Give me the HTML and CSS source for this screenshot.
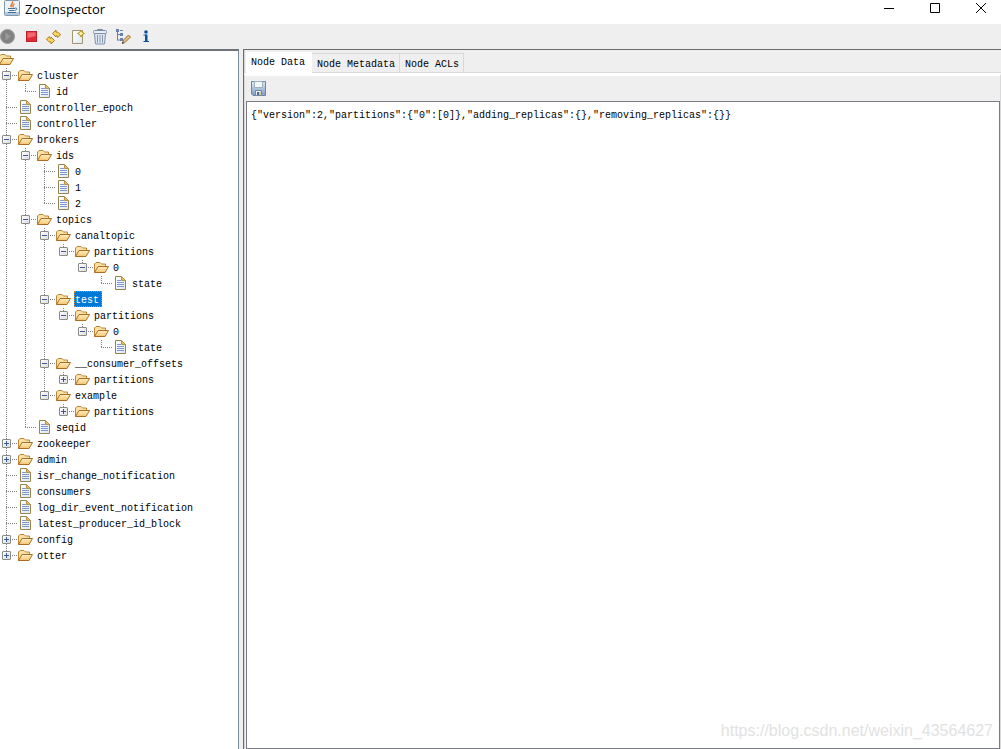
FILE: index.html
```html
<!DOCTYPE html>
<html lang="en">
<head>
<meta charset="utf-8">
<title>ZooInspector</title>
<link rel="stylesheet" href="styles.css">
</head>
<body>
<svg class="sprite" aria-hidden="true">
  <defs>
    <linearGradient id="gold" x1="0" y1="0" x2="0" y2="1"><stop offset="0" stop-color="#fff0c4"/><stop offset="1" stop-color="#f5c46c"/></linearGradient>
    <linearGradient id="paper" x1="0" y1="0" x2="1" y2="1"><stop offset="0" stop-color="#ffffff"/><stop offset="1" stop-color="#dde8f8"/></linearGradient>
    <linearGradient id="steel" x1="0" y1="0" x2="0" y2="1"><stop offset="0" stop-color="#dfe9f5"/><stop offset="1" stop-color="#7f9cc4"/></linearGradient>
  </defs>
  <symbol id="folder" viewBox="0 0 16 16">
    <path d="M.5 12.500V4L2 2.500h4L7.500 4h4V6.500" fill="#fbe2a4" stroke="#b98637"/>
    <path d="M.5 12.500 4 6.500h10.500L11 12.500z" fill="url(#gold)" stroke="#a96d24" stroke-linejoin="round"/>
  </symbol>
  <symbol id="file" viewBox="0 0 16 16">
    <path d="M2.500.5h6L12.500 4.500v9h-10z" fill="url(#paper)" stroke="#94854f"/>
    <path d="M8.500.5v4h4z" fill="#e8bd62" stroke="#b9924a"/>
    <path d="M4 4.500h4M4 6.500h7M4 8.500h7M4 10.500h7" stroke="#8098cb"/>
  </symbol>
</svg>

<header class="titlebar">
  <svg class="app-icon" viewBox="0 0 16 16" aria-hidden="true">
    <rect x=".5" y=".5" width="15" height="15" rx="1" fill="#e9f0f6" stroke="#8098ad"/>
    <path d="M1 12h14v3H1z" fill="#b4c8d9"/>
    <path d="M8.500 1.500c1 2-3 3-1 5.500M10.500 4c-2 1-2 2-1 3.500" fill="none" stroke="#e66a18" stroke-width="1.300"/>
    <path d="M4 8.500h7M11 8c3 0 2 2-.5 2.500M5 10.500h5M4 12.500h8" fill="none" stroke="#44719a"/>
  </svg>
  <h1 class="title">ZooInspector</h1>
  <div class="window-buttons">
    <button class="window-button" aria-label="Minimize"><svg viewBox="0 0 12 12"><path d="M1 6.500h10"/></svg></button>
    <button class="window-button" aria-label="Maximize"><svg viewBox="0 0 12 12"><path d="M1.500 1.500h9v9h-9z"/></svg></button>
    <button class="window-button" aria-label="Close"><svg viewBox="0 0 12 12"><path d="M1 1l10 10M11 1 1 11"/></svg></button>
  </div>
</header>

<div class="toolbar" role="toolbar" aria-label="Main">
  <button class="tool" aria-label="Connect"><svg viewBox="0 0 16 16"><circle cx="7.500" cy="7.500" r="7" fill="#828282" stroke="#999"/><path d="M5.500 3.500v8l5-4z" fill="#9b9b9b"/></svg></button>
  <button class="tool" aria-label="Disconnect"><svg viewBox="0 0 16 16"><rect x="3.500" y="2.500" width="10" height="10" fill="#e22b38" stroke="#c51c29"/><path d="M4.500 3.500h8V7l-8 2z" fill="#f06a70"/></svg></button>
  <button class="tool" aria-label="Refresh"><svg viewBox="0 0 16 16"><path d="M6.500 4.500 10 1v2c2 0 3.500 1 4.500 3l-3 2.500c0-1.500-.5-2-1.500-2V8z" fill="#f8d663" stroke="#b27b18" stroke-linejoin="round"/><path d="M8.500 11.500 5 15v-2c-2 0-3.500-1-4.500-3l3-2.500c0 1.500.5 2 1.500 2V8z" fill="#f8d663" stroke="#b27b18" stroke-linejoin="round"/></svg></button>
  <button class="tool" aria-label="Add node"><svg viewBox="0 0 16 16"><path d="M3.500 1.500h10v13h-10z" fill="url(#paper)" stroke="#a3956b"/><path d="m12 1 1.200 2.300L15.500 4.500 13.200 5.700 12 8l-1.200-2.300L8.500 4.500l2.300-1.200z" fill="#fff3a0" stroke="#b58e1c"/></svg></button>
  <button class="tool" aria-label="Delete node"><svg viewBox="0 0 16 16"><path d="M5.500 2.500v-2h5v2" fill="none" stroke="#7c8ca5"/><path d="M2.500 4.500h11l-1 10.500h-9z" fill="#dce4ef" stroke="#8191ab"/><rect x="1.500" y="1.500" width="13" height="3" rx="1" fill="#e9eff6" stroke="#7c8ca5"/><path d="M5.500 6v7.500M8 6v7.500M10.500 6v7.500" stroke="#8a9ab3"/></svg></button>
  <button class="tool" aria-label="Node viewers"><svg viewBox="0 0 16 16"><path d="M2.500 2v9.500M2.500 5.500h3M2.500 11h3" fill="none" stroke="#6880a9"/><path d="M1 0h3v3H1zM5 1h3v1H5zM5 4h3v3H5zM5 9h3v3H5z" fill="#6880b0"/><path d="M7.500 14 8.500 11 13.500 6l2 2-5 5z" fill="#e6bd7a" stroke="#997043"/><path d="m7 15 .5-2 1.500 1.500z" fill="#333"/></svg></button>
  <button class="tool" aria-label="About"><svg viewBox="0 0 16 16"><circle cx="8" cy="3" r="1.800" fill="#07539b"/><path d="M5.500 5.500H9.500v6.500H11v1H5.500v-1H7V6.500H5.500z" fill="#07539b"/></svg></button>
</div>

<main class="split">
  <nav class="tree-pane" aria-label="Nodes">
    <ul class="tree root">
      <li><div class="row"><svg class="icon"><use href="#folder"/></svg></div>
      <ul class="tree">
        <li><div class="row"><button class="toggle" aria-label="Collapse cluster"></button><svg class="icon"><use href="#folder"/></svg><span class="label">cluster</span></div>
          <ul class="tree">
            <li><div class="row"><svg class="icon"><use href="#file"/></svg><span class="label">id</span></div></li>
          </ul></li>
        <li><div class="row"><svg class="icon"><use href="#file"/></svg><span class="label">controller_epoch</span></div></li>
        <li><div class="row"><svg class="icon"><use href="#file"/></svg><span class="label">controller</span></div></li>
        <li><div class="row"><button class="toggle" aria-label="Collapse brokers"></button><svg class="icon"><use href="#folder"/></svg><span class="label">brokers</span></div>
          <ul class="tree">
            <li><div class="row"><button class="toggle" aria-label="Collapse ids"></button><svg class="icon"><use href="#folder"/></svg><span class="label">ids</span></div>
              <ul class="tree">
                <li><div class="row"><svg class="icon"><use href="#file"/></svg><span class="label">0</span></div></li>
                <li><div class="row"><svg class="icon"><use href="#file"/></svg><span class="label">1</span></div></li>
                <li><div class="row"><svg class="icon"><use href="#file"/></svg><span class="label">2</span></div></li>
              </ul></li>
            <li><div class="row"><button class="toggle" aria-label="Collapse topics"></button><svg class="icon"><use href="#folder"/></svg><span class="label">topics</span></div>
              <ul class="tree">
                <li><div class="row"><button class="toggle" aria-label="Collapse canaltopic"></button><svg class="icon"><use href="#folder"/></svg><span class="label">canaltopic</span></div>
                  <ul class="tree">
                    <li><div class="row"><button class="toggle" aria-label="Collapse partitions"></button><svg class="icon"><use href="#folder"/></svg><span class="label">partitions</span></div>
                      <ul class="tree">
                        <li><div class="row"><button class="toggle" aria-label="Collapse 0"></button><svg class="icon"><use href="#folder"/></svg><span class="label">0</span></div>
                          <ul class="tree">
                            <li><div class="row"><svg class="icon"><use href="#file"/></svg><span class="label">state</span></div></li>
                          </ul></li>
                      </ul></li>
                  </ul></li>
                <li><div class="row"><button class="toggle" aria-label="Collapse test"></button><svg class="icon"><use href="#folder"/></svg><span class="label selected">test</span></div>
                  <ul class="tree">
                    <li><div class="row"><button class="toggle" aria-label="Collapse partitions"></button><svg class="icon"><use href="#folder"/></svg><span class="label">partitions</span></div>
                      <ul class="tree">
                        <li><div class="row"><button class="toggle" aria-label="Collapse 0"></button><svg class="icon"><use href="#folder"/></svg><span class="label">0</span></div>
                          <ul class="tree">
                            <li><div class="row"><svg class="icon"><use href="#file"/></svg><span class="label">state</span></div></li>
                          </ul></li>
                      </ul></li>
                  </ul></li>
                <li><div class="row"><button class="toggle" aria-label="Collapse __consumer_offsets"></button><svg class="icon"><use href="#folder"/></svg><span class="label">__consumer_offsets</span></div>
                  <ul class="tree">
                    <li><div class="row"><button class="toggle closed" aria-label="Expand partitions"></button><svg class="icon"><use href="#folder"/></svg><span class="label">partitions</span></div></li>
                  </ul></li>
                <li><div class="row"><button class="toggle" aria-label="Collapse example"></button><svg class="icon"><use href="#folder"/></svg><span class="label">example</span></div>
                  <ul class="tree">
                    <li><div class="row"><button class="toggle closed" aria-label="Expand partitions"></button><svg class="icon"><use href="#folder"/></svg><span class="label">partitions</span></div></li>
                  </ul></li>
              </ul></li>
            <li><div class="row"><svg class="icon"><use href="#file"/></svg><span class="label">seqid</span></div></li>
          </ul></li>
        <li><div class="row"><button class="toggle closed" aria-label="Expand zookeeper"></button><svg class="icon"><use href="#folder"/></svg><span class="label">zookeeper</span></div></li>
        <li><div class="row"><button class="toggle closed" aria-label="Expand admin"></button><svg class="icon"><use href="#folder"/></svg><span class="label">admin</span></div></li>
        <li><div class="row"><svg class="icon"><use href="#file"/></svg><span class="label">isr_change_notification</span></div></li>
        <li><div class="row"><svg class="icon"><use href="#file"/></svg><span class="label">consumers</span></div></li>
        <li><div class="row"><svg class="icon"><use href="#file"/></svg><span class="label">log_dir_event_notification</span></div></li>
        <li><div class="row"><svg class="icon"><use href="#file"/></svg><span class="label">latest_producer_id_block</span></div></li>
        <li><div class="row"><button class="toggle closed" aria-label="Expand config"></button><svg class="icon"><use href="#folder"/></svg><span class="label">config</span></div></li>
        <li><div class="row"><button class="toggle closed" aria-label="Expand otter"></button><svg class="icon"><use href="#folder"/></svg><span class="label">otter</span></div></li>
      </ul></li>
    </ul>
  </nav>

  <section class="detail">
    <div class="tabs" role="tablist">
      <button class="tab active" role="tab" aria-selected="true">Node Data</button>
      <button class="tab" role="tab" aria-selected="false">Node Metadata</button>
      <button class="tab" role="tab" aria-selected="false">Node ACLs</button>
    </div>
    <div class="panel">
      <div class="panel-tools">
        <button class="tool" aria-label="Save"><svg viewBox="0 0 16 16"><path d="M.5.5h14v14H2L.5 13z" fill="url(#steel)" stroke="#6d85a3"/><path d="M3.500.5h8v6h-8z" fill="#f4f8f4" stroke="#9db0bf"/><path d="M4.500 9.500h6v5h-6z" fill="#e9eef0" stroke="#7389a3"/><path d="M6 11h2v3H6z" fill="#4f6f9c"/><path d="M8 11h2v3H8z" fill="#d9c784"/></svg></button>
      </div>
      <textarea class="data" aria-label="Node data" spellcheck="false">{"version":2,"partitions":{"0":[0]},"adding_replicas":{},"removing_replicas":{}}</textarea>
    </div>
  </section>
</main>
<div class="watermark">https://blog.csdn.net/weixin_43564627</div>
</body>
</html>
```
FILE: styles.css
```css
* { box-sizing: border-box; }

body {
  margin: 0;
  height: 100vh;
  display: flex;
  flex-direction: column;
  overflow: hidden;
  background: #efefef;
  color: #000;
  font: 10px/16px "Liberation Mono", monospace;
}

button {
  margin: 0;
  padding: 0;
  border: 0;
  background: none;
  color: inherit;
  font: inherit;
}

.sprite { position: absolute; width: 0; height: 0; }

.titlebar {
  display: flex;
  align-items: flex-start;
  height: 24px;
  padding-left: 4px;
  background: #fff;
}
.app-icon { width: 16px; height: 16px; }
.title {
  flex: 1;
  margin: 0 0 0 5px;
  font: 13px/18px "Open Sans", "Noto Sans", sans-serif;
}
.window-buttons { display: flex; margin-right: -3px; }
.window-button {
  width: 46px;
  height: 16px;
  display: flex;
  align-items: center;
  justify-content: center;
}
.window-button svg {
  width: 12px;
  height: 12px;
  fill: none;
  stroke: #000;
}

.toolbar {
  display: flex;
  align-items: center;
  gap: 7px;
  height: 25px;
}
.tool { width: 16px; height: 16px; }
.tool svg { display: block; width: 16px; height: 16px; }

.split {
  flex: 1;
  min-height: 0;
  display: flex;
  gap: 4px;
}

.tree-pane {
  width: 239px;
  flex: none;
  padding-top: 1px;
  overflow: hidden;
  background: #fff;
  border-top: 2px solid #6d7378;
  border-right: 1px solid #7a8a99;
}
.tree {
  margin: 0 0 0 19px;
  padding: 0;
  list-style: none;
}
.tree.root { margin-left: -19px; }
.tree li { position: relative; }
.tree .tree > li::before {
  content: "";
  position: absolute;
  left: 6px;
  top: 0;
  width: 1px;
  height: 100%;
  background: repeating-linear-gradient(#808080 0 1px, transparent 1px 2px);
}
.tree .tree > li:last-child::before { height: 8px; }
.row {
  position: relative;
  display: flex;
  height: 16px;
  padding-left: 18px;
}
.tree .tree .row::before {
  content: "";
  position: absolute;
  left: 6px;
  top: 7px;
  width: 11px;
  height: 1px;
  background: repeating-linear-gradient(90deg, #808080 0 1px, transparent 1px 2px);
}
.toggle {
  position: absolute;
  left: 2px;
  top: 3px;
  width: 9px;
  height: 9px;
  border: 1px solid #8a8a8a;
  border-radius: 1px;
  background:
    linear-gradient(#3b57a0, #3b57a0) center / 5px 1px no-repeat,
    linear-gradient(135deg, #fff, #dedede);
}
.toggle.closed {
  background:
    linear-gradient(#3b57a0, #3b57a0) center / 5px 1px no-repeat,
    linear-gradient(#3b57a0, #3b57a0) center / 1px 5px no-repeat,
    linear-gradient(135deg, #fff, #dedede);
}
.icon { width: 16px; height: 16px; margin-right: 2px; }
.label {
  height: 16px;
  margin-top: -1px;
  padding: 0 3px 0 1px;
  line-height: 20px;
  white-space: nowrap;
}
.label.selected {
  background: #0078d7;
  color: #fff;
  outline: 1px dotted #e08328;
  outline-offset: -1px;
}

.detail {
  flex: 1;
  min-width: 0;
  display: flex;
  flex-direction: column;
  border-top: 1px solid #6b6b6b;
  border-left: 1px solid #6b6b6b;
}
.tabs {
  display: flex;
  align-items: flex-end;
  height: 23px;
  padding-left: 1px;
  border-left: 1px solid #d9d9d9;
  border-bottom: 1px solid #d9d9d9;
}
.tab {
  height: 19px;
  padding: 3px 4px 0 5px;
  border: 1px solid #d9d9d9;
  border-left: 0;
  border-bottom: 0;
  white-space: nowrap;
}
.tab.active {
  height: 21px;
  margin-bottom: -1px;
  padding: 0 7px 0 5px;
  border: 0;
  background: #fff;
}
.panel {
  flex: 1;
  min-height: 0;
  display: flex;
  flex-direction: column;
  border: 1px solid #d9d9d9;
  border-top: 3px solid #fff;
  border-bottom: 0;
}
.panel-tools {
  display: flex;
  align-items: center;
  height: 25px;
  padding-left: 5px;
  margin-left: 1px;
}
.data {
  flex: 1;
  display: block;
  margin: 0 0 0 1px;
  padding: 6px 4px;
  border: 1px solid #7a7a88;
  border-radius: 0;
  outline: 0;
  resize: none;
  background: #fff;
  color: #000;
  font: inherit;
}

.watermark {
  position: absolute;
  right: 8px;
  bottom: 8px;
  color: #e2e2e2;
  font: 16px/20px "Liberation Sans", Arial, sans-serif;
  pointer-events: none;
}
```
